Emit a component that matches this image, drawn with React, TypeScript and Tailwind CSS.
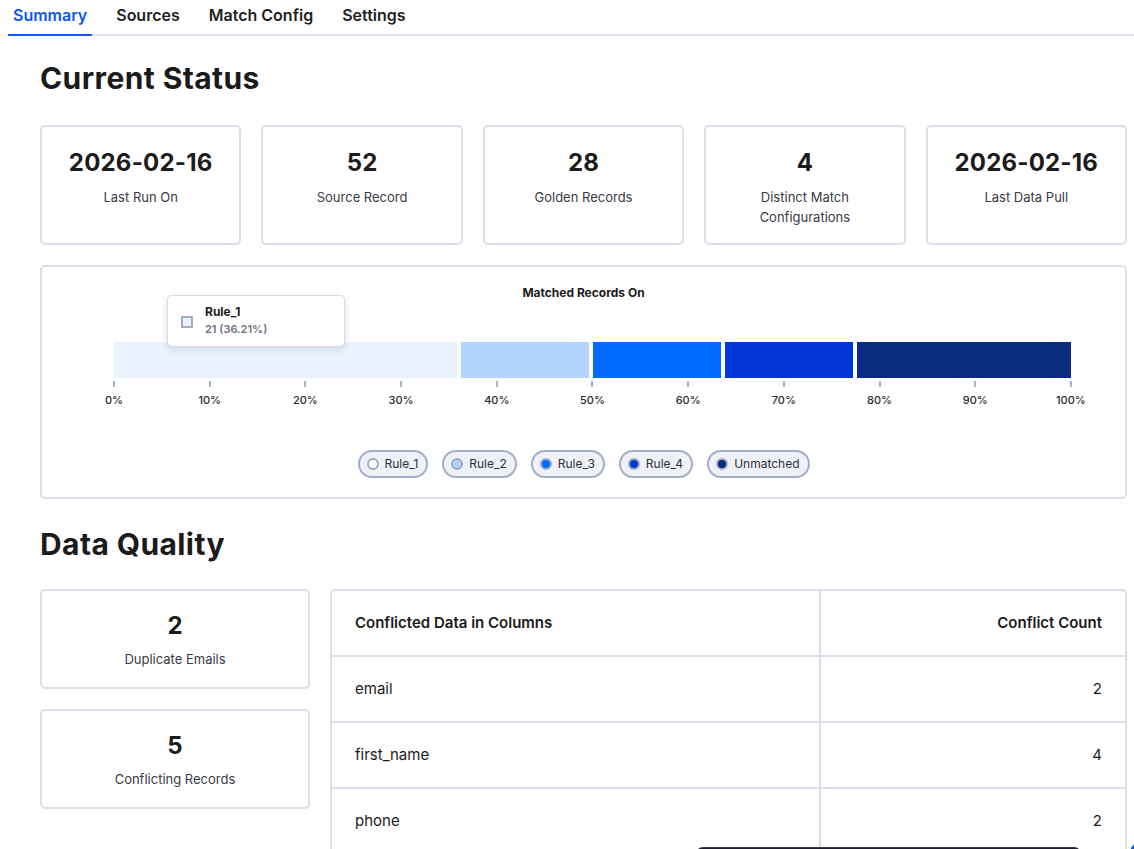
import React from 'react';

const stats = [
  { value: '2026-02-16', label: 'Last Run On' },
  { value: '52', label: 'Source Record' },
  { value: '28', label: 'Golden Records' },
  { value: '4', label: 'Distinct Match Configurations' },
  { value: '2026-02-16', label: 'Last Data Pull' },
];

const segments = [
  { name: 'Rule_1', count: 21, color: 'bg-[#eaf2fe]' },
  { name: 'Rule_2', count: 8, color: 'bg-[#b1d3fd]' },
  { name: 'Rule_3', count: 8, color: 'bg-[#006bfe]' },
  { name: 'Rule_4', count: 8, color: 'bg-[#0036d7]' },
  { name: 'Unmatched', count: 13, color: 'bg-[#0a2b80]' },
];

const total = segments.reduce((s, x) => s + x.count, 0);
const ticks = ['0%', '10%', '20%', '30%', '40%', '50%', '60%', '70%', '80%', '90%', '100%'];

const conflicts = [
  { column: 'email', count: 2 },
  { column: 'first_name', count: 4 },
  { column: 'phone', count: 2 },
  { column: 'last_name', count: 1 },
];

const tabs = ['Summary', 'Sources', 'Match Config', 'Settings'];

const StatCard = ({ value, label }: { value: string; label: string }) => (
  <div className="border-2 border-[#dadfe9] rounded-[5px] bg-white flex flex-col items-center pt-[20px] pb-[16px] px-4 text-center">
    <div className="text-[24px] leading-[32px] font-bold text-[#1b1b1b] tracking-[0.2px]">{value}</div>
    <div className="mt-[8px] text-[13px] leading-[20px] text-[#3a3a46] max-w-[130px]">{label}</div>
  </div>
);

export default function App() {
  return (
    <div className="min-h-screen bg-white text-[#1b1b1b]" style={{ fontFamily: 'Inter, "Noto Sans", sans-serif' }}>
      {/* Tabs */}
      <div className="ml-2 flex gap-[19px] border-b-2 border-[#dde2ec]">
        {tabs.map((t, i) => (
          <div
            key={t}
            className={
              i === 0
                ? 'px-[5px] pt-[5px] pb-[9px] text-[16px] leading-[20px] font-semibold text-[#0b57f4] border-b-2 border-[#0b57f4] -mb-[2px]'
                : 'px-[5px] pt-[5px] pb-[9px] text-[16px] leading-[20px] font-semibold text-[#1f1f1f]'
            }
          >
            {t}
          </div>
        ))}
      </div>

      <div className="pl-10 pr-[7px]">
        <h1 className="mt-[24px] text-[30px] leading-[36px] font-bold tracking-[0.4px]">Current Status</h1>

        <div className="mt-[29px] grid grid-cols-5 gap-5">
          {stats.map((s, i) => (
            <StatCard key={i} value={s.value} label={s.label} />
          ))}
        </div>

        {/* Chart */}
        <div className="relative mt-5 border-2 border-[#dadfe9] rounded-[5px] pt-[18px] pb-[19px]">
          <div className="text-center text-[12px] leading-[16px] font-bold">Matched Records On</div>

          <div className="ml-[72px] mr-[54px] mt-[41px]">
            <div className="flex h-9">
              {segments.map((s, i) => (
                <div
                  key={s.name}
                  className={`${s.color} h-full ${i < segments.length - 1 ? 'border-r-4 border-white' : ''}`}
                  style={{ width: `${(s.count / total) * 100}%` }}
                />
              ))}
            </div>
            <div className="flex justify-between mt-[3px]">
              {ticks.map((t) => (
                <div key={t} className="w-0 flex flex-col items-center">
                  <div className="w-[2px] h-[6px] bg-[#a7afc5]" />
                  <div className="mt-[6px] text-[11px] leading-[14px] font-medium text-[#2a2a2a] whitespace-nowrap">{t}</div>
                </div>
              ))}
            </div>
          </div>

          {/* Legend */}
          <div className="mt-[43px] flex justify-center gap-[14px]">
            {segments.map((s) => (
              <div
                key={s.name}
                className="h-[28px] flex items-center gap-[6px] pl-[7px] pr-[8px] rounded-full border-2 border-[#a4adc7] bg-[#eef2f8] text-[12px] text-[#2f2f35]"
              >
                <span className={`w-[12px] h-[12px] rounded-full border-2 border-[#a0a9c2] ${s.name === 'Rule_1' ? 'bg-white' : s.color}`} />
                {s.name}
              </div>
            ))}
          </div>

          {/* Tooltip */}
          <div className="absolute left-[125px] top-[28px] w-[178px] h-[52px] bg-white border border-[#d6dbe5] rounded-[5px] shadow-[0_2px_6px_rgba(30,40,70,0.15)] flex items-start pl-[13px] pt-[8px]">
            <span className="mt-[12px] w-[12px] h-[12px] border-2 border-[#a3acc4] bg-[#eaf2fe]" />
            <div className="ml-[12px]">
              <div className="text-[12px] leading-[16px] font-bold text-[#1b1b1b]">Rule_1</div>
              <div className="mt-[2px] text-[11px] leading-[14px] font-semibold text-[#6f6f82]">21 (36.21%)</div>
            </div>
          </div>
        </div>

        <h2 className="mt-[27px] text-[30px] leading-[36px] font-bold tracking-[0.4px]">Data Quality</h2>

        <div className="mt-[27px] grid grid-cols-[270px_1fr] gap-5 items-start">
          <div className="flex flex-col gap-5">
            {[{ value: '2', label: 'Duplicate Emails' }, { value: '5', label: 'Conflicting Records' }].map((c) => (
              <div key={c.label} className="border-2 border-[#dadfe9] rounded-[5px] flex flex-col items-center pt-[19px] pb-[18px]">
                <div className="text-[24px] leading-[32px] font-bold">{c.value}</div>
                <div className="mt-[7px] text-[13px] leading-[20px] text-[#3a3a46]">{c.label}</div>
              </div>
            ))}
          </div>

          <div className="border-2 border-[#dadfe9] rounded-t-[5px]">
            <div className="grid grid-cols-[489px_1fr] h-[66px] border-b-2 border-[#dadfe9]">
              <div className="flex items-center pl-[23px] text-[15px] font-semibold border-r-2 border-[#dadfe9]">
                Conflicted Data in Columns
              </div>
              <div className="flex items-center justify-end pr-[23px] text-[15px] font-semibold">Conflict Count</div>
            </div>
            {conflicts.map((r) => (
              <div key={r.column} className="grid grid-cols-[489px_1fr] h-[66px] border-b-2 border-[#dadfe9]">
                <div className="flex items-center pl-[23px] text-[15px] border-r-2 border-[#dadfe9]">{r.column}</div>
                <div className="flex items-center justify-end pr-[23px] text-[15px]">{r.count}</div>
              </div>
            ))}
          </div>
        </div>
        <div className="h-16" />
      </div>

      {/* Overlays at bottom of viewport */}
      <div className="fixed left-[695px] top-[847px] w-[387px] h-[44px] rounded-lg bg-[#1c1c2b] border border-[#3a3d55]" />
      <div className="fixed left-[1128px] top-[836px] w-[48px] h-[48px] rounded-full bg-[#0b57f4]" />
    </div>
  );
}
